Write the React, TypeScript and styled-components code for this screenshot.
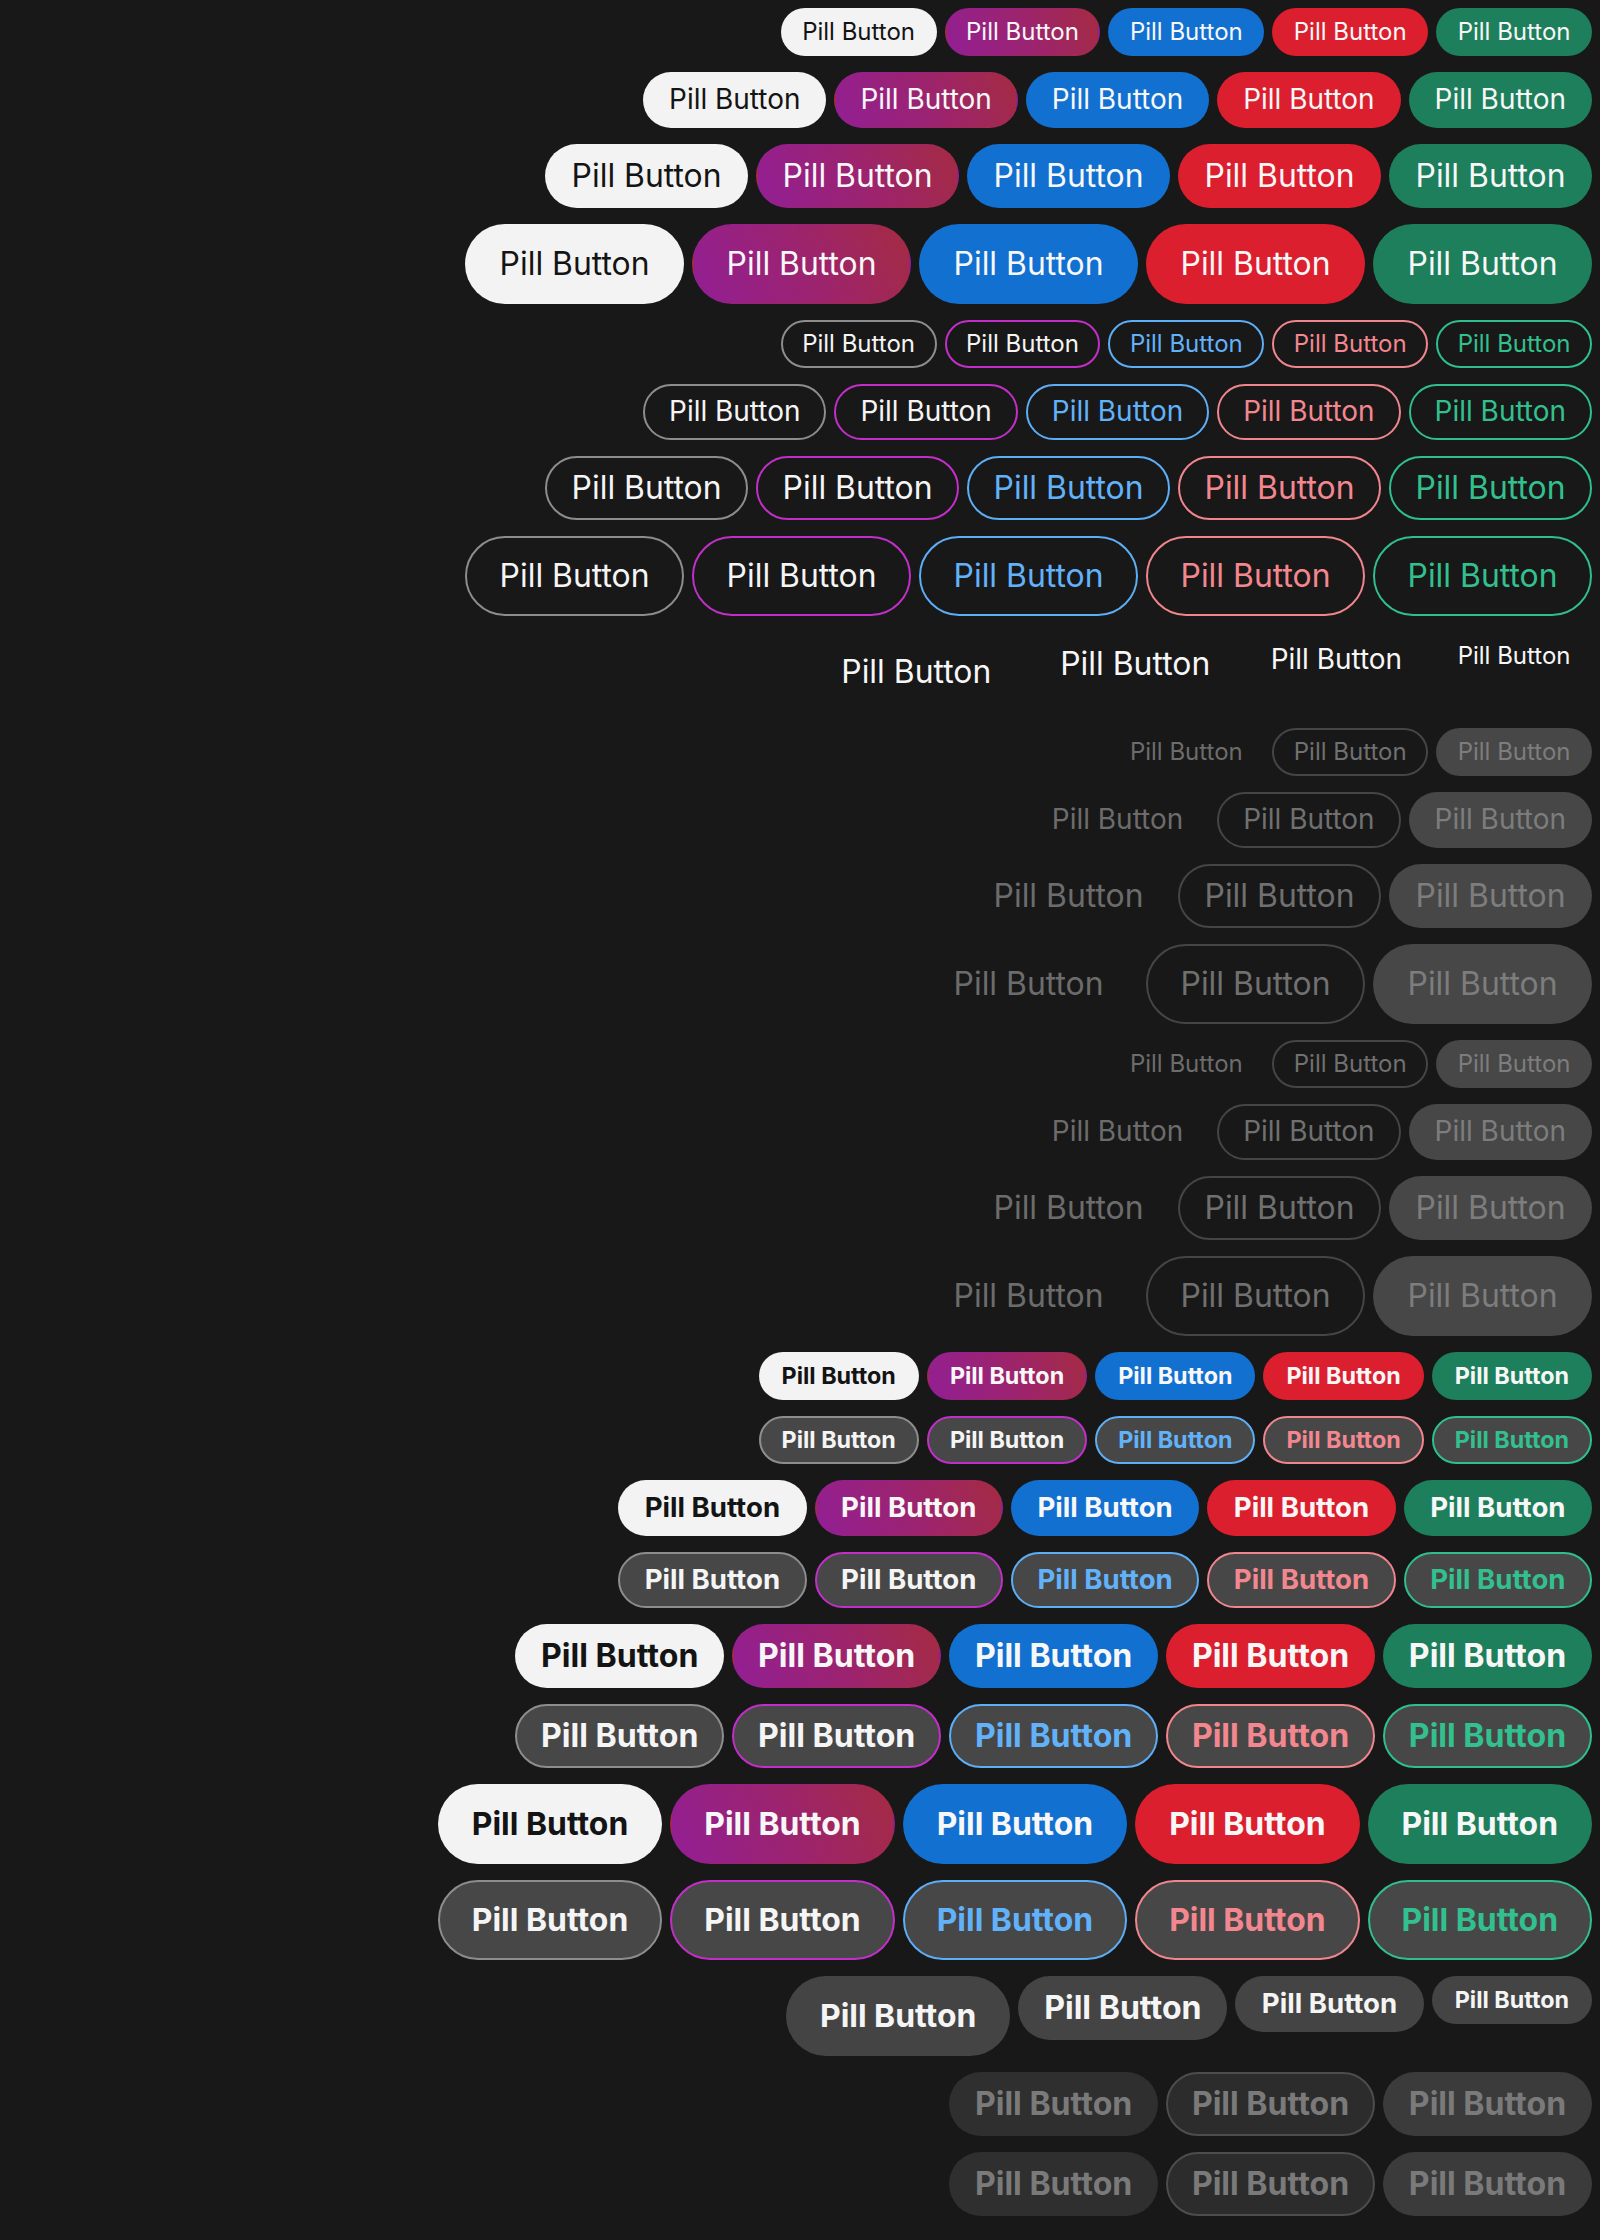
import styled, { createGlobalStyle, css } from "styled-components";

type Size = "xs" | "sm" | "md" | "lg";
type Tone = "neutral" | "purple" | "blue" | "red" | "green";
type Variant =
  | "filled"
  | "outline"
  | "ghost"
  | "tinted"
  | "soft"
  | "ghostOff"
  | "outlineOff"
  | "filledOff"
  | "softOff"
  | "tintedOff"
  | "solidOff";

const GlobalStyle = createGlobalStyle`
  html, body {
    background: #181818;
  }
  body {
    margin: 8px;
    font-family: Inter, "Noto Sans", sans-serif;
  }
`;

// taille de chaque format (regular / bold)
const sizes = {
  regular: {
    xs: { h: 48, fs: 24, px: 21.5 },
    sm: { h: 56, fs: 27.95, px: 26 },
    md: { h: 64, fs: 31.9, px: 26.5 },
    lg: { h: 80, fs: 31.9, px: 34.5 },
  },
  bold: {
    xs: { h: 48, fs: 23.3, px: 23 },
    sm: { h: 56, fs: 27.6, px: 26.5 },
    md: { h: 64, fs: 32.1, px: 25.8 },
    lg: { h: 80, fs: 31.9, px: 34 },
  },
};

const fills: Record<Tone, string> = {
  neutral: "#f3f3f3",
  purple: "linear-gradient(65deg, #921f95 0%, #9c2370 50%, #a42b42 100%)",
  blue: "#1270d1",
  red: "#dc1f2e",
  green: "#1e7f5c",
};

const lines: Record<Tone, string> = {
  neutral: "#8d8d8d",
  purple: "#c22fc8",
  blue: "#5caef6",
  red: "#f0868d",
  green: "#2fbf8e",
};

const inks: Record<Tone, string> = {
  neutral: "#f5f5f5",
  purple: "#f5f5f5",
  blue: "#62b2fa",
  red: "#f3878f",
  green: "#33c08f",
};

const variantStyles = (variant: Variant, tone: Tone) => {
  switch (variant) {
    case "filled":
      return css`
        background: ${fills[tone]};
        color: ${tone === "neutral" ? "#141414" : "#f7f7f7"};
      `;
    case "outline":
      return css`
        background: transparent;
        border-color: ${lines[tone]};
        color: ${inks[tone]};
      `;
    case "ghost":
      return css`
        background: transparent;
        color: #f7f7f7;
      `;
    case "tinted":
      return css`
        background: #474747;
        border-color: ${lines[tone]};
        color: ${inks[tone]};
      `;
    case "soft":
      return css`
        background: #444444;
        color: #f5f5f5;
      `;
    case "ghostOff":
      return css`
        background: transparent;
        color: #6c6c6c;
      `;
    case "outlineOff":
      return css`
        background: transparent;
        border-color: #454545;
        color: #707070;
      `;
    case "filledOff":
      return css`
        background: #474747;
        color: #7d7d7d;
      `;
    case "softOff":
      return css`
        background: #2f2f2f;
        color: #7a7a7a;
      `;
    case "tintedOff":
      return css`
        background: #2c2c2c;
        border-color: #4d4d4d;
        color: #7a7a7a;
      `;
    case "solidOff":
      return css`
        background: #3b3b3b;
        color: #7a7a7a;
      `;
  }
};

const Page = styled.main`
  display: flex;
  flex-direction: column;
  align-items: flex-end;
  gap: 16px;
`;

const Row = styled.div`
  display: flex;
  justify-content: flex-end;
  align-items: flex-start;
  gap: 8px;
`;

const Pill = styled.button<{
  $size: Size;
  $variant: Variant;
  $tone: Tone;
  $bold?: boolean;
}>`
  box-sizing: border-box;
  display: inline-flex;
  align-items: center;
  justify-content: center;
  flex: none;
  margin: 0;
  border: 2px solid transparent;
  border-radius: 9999px;
  font-family: Inter, "Noto Sans", sans-serif;
  white-space: nowrap;
  line-height: 1;
  cursor: pointer;
  height: ${(p) => sizes[p.$bold ? "bold" : "regular"][p.$size].h}px;
  padding: 0 ${(p) => sizes[p.$bold ? "bold" : "regular"][p.$size].px - 2}px;
  font-size: ${(p) => sizes[p.$bold ? "bold" : "regular"][p.$size].fs}px;
  font-weight: ${(p) => (p.$bold ? 700 : 400)};
  ${(p) => variantStyles(p.$variant, p.$tone)}
`;

const tones: Tone[] = ["neutral", "purple", "blue", "red", "green"];
const allSizes: Size[] = ["xs", "sm", "md", "lg"];
const reversed: Size[] = ["lg", "md", "sm", "xs"];

const LABEL = "Pill Button";

const ToneRow = ({
  size,
  variant,
  bold,
}: {
  size: Size;
  variant: Variant;
  bold?: boolean;
}) => (
  <Row>
    {tones.map((tone) => (
      <Pill key={tone} $size={size} $variant={variant} $tone={tone} $bold={bold}>
        {LABEL}
      </Pill>
    ))}
  </Row>
);

const DisabledRow = ({ size }: { size: Size }) => (
  <Row>
    {(["ghostOff", "outlineOff", "filledOff"] as Variant[]).map((v) => (
      <Pill key={v} $size={size} $variant={v} $tone="neutral" disabled>
        {LABEL}
      </Pill>
    ))}
  </Row>
);

const App = () => {
  return (
    <>
      <GlobalStyle />
      <Page>
        {allSizes.map((s) => (
          <ToneRow key={"f" + s} size={s} variant="filled" />
        ))}
        {allSizes.map((s) => (
          <ToneRow key={"o" + s} size={s} variant="outline" />
        ))}
        <Row>
          {reversed.map((s) => (
            <Pill key={s} $size={s} $variant="ghost" $tone="neutral">
              {LABEL}
            </Pill>
          ))}
        </Row>
        {allSizes.map((s) => (
          <DisabledRow key={"d1" + s} size={s} />
        ))}
        {allSizes.map((s) => (
          <DisabledRow key={"d2" + s} size={s} />
        ))}
        {allSizes.map((s) => (
          <div key={"b" + s} style={{ display: "contents" }}>
            <ToneRow size={s} variant="filled" bold />
            <ToneRow size={s} variant="tinted" bold />
          </div>
        ))}
        <Row>
          {reversed.map((s) => (
            <Pill key={s} $size={s} $variant="soft" $tone="neutral" $bold>
              {LABEL}
            </Pill>
          ))}
        </Row>
        {[0, 1].map((i) => (
          <Row key={"bd" + i}>
            {(["softOff", "tintedOff", "solidOff"] as Variant[]).map((v) => (
              <Pill key={v} $size="md" $variant={v} $tone="neutral" $bold disabled>
                {LABEL}
              </Pill>
            ))}
          </Row>
        ))}
      </Page>
    </>
  );
};

export default App;
